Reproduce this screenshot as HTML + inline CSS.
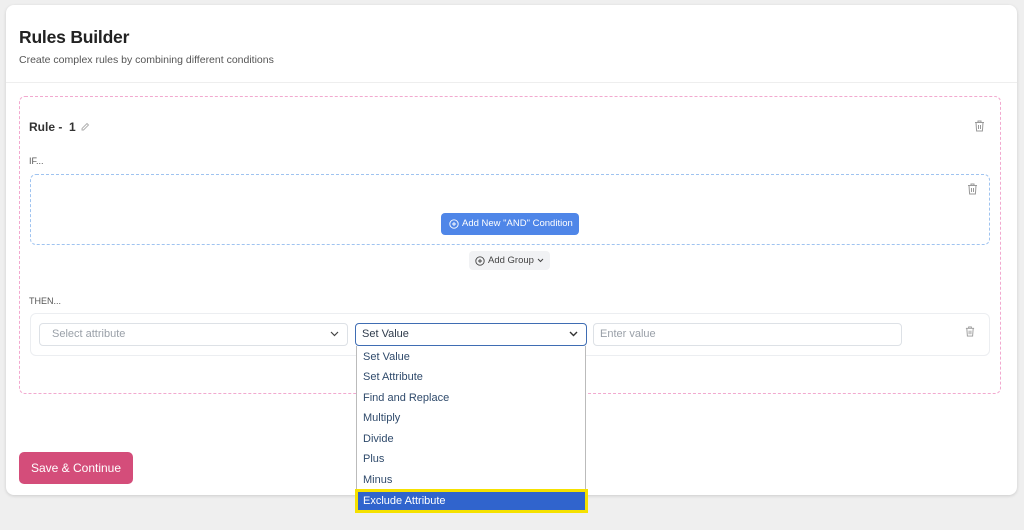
<!DOCTYPE html>
<html><head><style>
*{box-sizing:border-box;margin:0;padding:0}
body{width:1024px;height:530px;background:#efefef;font-family:"Liberation Sans",sans-serif;position:relative;overflow:hidden;color:#222}
.a{position:absolute}
.card{left:6px;top:5px;width:1011px;height:490px;background:#fff;border-radius:8px;box-shadow:0 1px 3px rgba(0,0,0,.15)}
.sel{border:1px solid #dde1e6;border-radius:4px;height:23px;font-size:11px;line-height:21px;padding-left:12px;color:#9aa0a8}
.chev{position:absolute;right:8px;top:7px}
.opt{position:absolute;left:0;width:229px;height:20.5px;font-size:11px;line-height:20px;padding-left:6px;color:#2f4a6b}
</style></head><body>
<div class="a card"></div>
<div class="a" style="left:19px;top:27px;font-size:17.5px;font-weight:bold;color:#222;letter-spacing:-0.2px">Rules Builder</div>
<div class="a" style="left:19px;top:54px;font-size:10.5px;color:#555">Create complex rules by combining different conditions</div>
<div class="a" style="left:6px;top:82px;width:1011px;height:1px;background:#eee"></div>
<div class="a" style="left:19px;top:96px;width:982px;height:298px;border:1px dashed #f2a9cf;border-radius:6px"></div>
<div class="a" style="left:29px;top:120px;font-size:12px;font-weight:bold;color:#333">Rule -&nbsp; 1</div>
<svg class="a" style="left:80px;top:122px" width="10" height="10" viewBox="0 0 10 10"><path d="M2 8 L2 6.5 L7 1.5 L8.5 3 L3.5 8 Z" fill="none" stroke="#aaa" stroke-width=".9"/></svg>
<svg class="a" style="left:974px;top:120px" width="11" height="12" viewBox="0 0 11 12"><path d="M1 2.5H10M4 2.5V1H7V2.5M2 2.5L2.6 11H8.4L9 2.5M4.5 5V9M6.5 5V9" fill="none" stroke="#999" stroke-width="1"/></svg>
<div class="a" style="left:29px;top:156px;font-size:9px;color:#555">IF...</div>
<div class="a" style="left:30px;top:174px;width:960px;height:71px;border:1px dashed #9fc3f0;border-radius:6px"></div>
<svg class="a" style="left:967px;top:183px" width="11" height="12" viewBox="0 0 11 12"><path d="M1 2.5H10M4 2.5V1H7V2.5M2 2.5L2.6 11H8.4L9 2.5M4.5 5V9M6.5 5V9" fill="none" stroke="#999" stroke-width="1"/></svg>
<div class="a" style="left:441px;top:213px;width:138px;height:22px;background:#4f86e8;border-radius:4px;color:#fff;font-size:9.5px;line-height:22px;padding-left:21px">Add New "AND" Condition</div>
<svg class="a" style="left:449px;top:219px" width="10" height="10" viewBox="0 0 10 10"><circle cx="5" cy="5" r="4.2" fill="none" stroke="#fff" stroke-width=".9"/><path d="M5 3V7M3 5H7" stroke="#fff" stroke-width=".9"/></svg>
<div class="a" style="left:469px;top:251px;width:81px;height:19px;background:#f1f2f4;border-radius:4px;color:#444;font-size:9.5px;line-height:19px;padding-left:19px">Add Group</div>
<svg class="a" style="left:475px;top:256px" width="10" height="10" viewBox="0 0 10 10"><circle cx="5" cy="5" r="4.2" fill="none" stroke="#444" stroke-width=".9"/><path d="M5 3V7M3 5H7" stroke="#444" stroke-width=".9"/></svg>
<svg class="a" style="left:537px;top:258px" width="7" height="5" viewBox="0 0 7 5"><path d="M1 1L3.5 3.5L6 1" fill="none" stroke="#444" stroke-width="1"/></svg>
<div class="a" style="left:29px;top:296px;font-size:9px;color:#555">THEN...</div>
<div class="a" style="left:30px;top:313px;width:960px;height:43px;border:1px solid #eceef1;border-radius:6px"></div>
<div class="a sel" style="left:39px;top:323px;width:309px">Select attribute<svg class="chev" width="9" height="6" viewBox="0 0 9 6"><path d="M1 1L4.5 4.5L8 1" fill="none" stroke="#444" stroke-width="1.2"/></svg></div>
<div class="a sel" style="left:355px;top:323px;width:232px;border-color:#3f6db3;color:#2f3b4b;padding-left:6px">Set Value<svg class="chev" width="9" height="6" viewBox="0 0 9 6"><path d="M1 1L4.5 4.5L8 1" fill="none" stroke="#333" stroke-width="1.4"/></svg></div>
<div class="a sel" style="left:593px;top:323px;width:309px;padding-left:6px">Enter value</div>
<svg class="a" style="left:965px;top:326px" width="10" height="11" viewBox="0 0 11 12"><path d="M1 2.5H10M4 2.5V1H7V2.5M2 2.5L2.6 11H8.4L9 2.5M4.5 5V9M6.5 5V9" fill="none" stroke="#999" stroke-width="1"/></svg>
<div class="a" style="left:19px;top:452px;width:114px;height:32px;background:#d44d7a;border-radius:5px;color:#fff;font-size:12px;line-height:32px;text-align:center">Save &amp; Continue</div>
<div class="a" style="left:356px;top:346px;width:230px;height:166px;background:#fff;border:1px solid #bbb;border-top:none">
<div class="opt" style="top:1px">Set Value</div>
<div class="opt" style="top:21px">Set Attribute</div>
<div class="opt" style="top:41.5px">Find and Replace</div>
<div class="opt" style="top:62px">Multiply</div>
<div class="opt" style="top:82.5px">Divide</div>
<div class="opt" style="top:103px">Plus</div>
<div class="opt" style="top:123.5px">Minus</div>
</div>
<div class="a" style="left:355px;top:489px;width:233px;height:24px;background:#3064cd;border:3px solid #f5e100;color:#fff;font-size:11px;line-height:18px;padding-left:5px">Exclude Attribute</div>
</body></html>
